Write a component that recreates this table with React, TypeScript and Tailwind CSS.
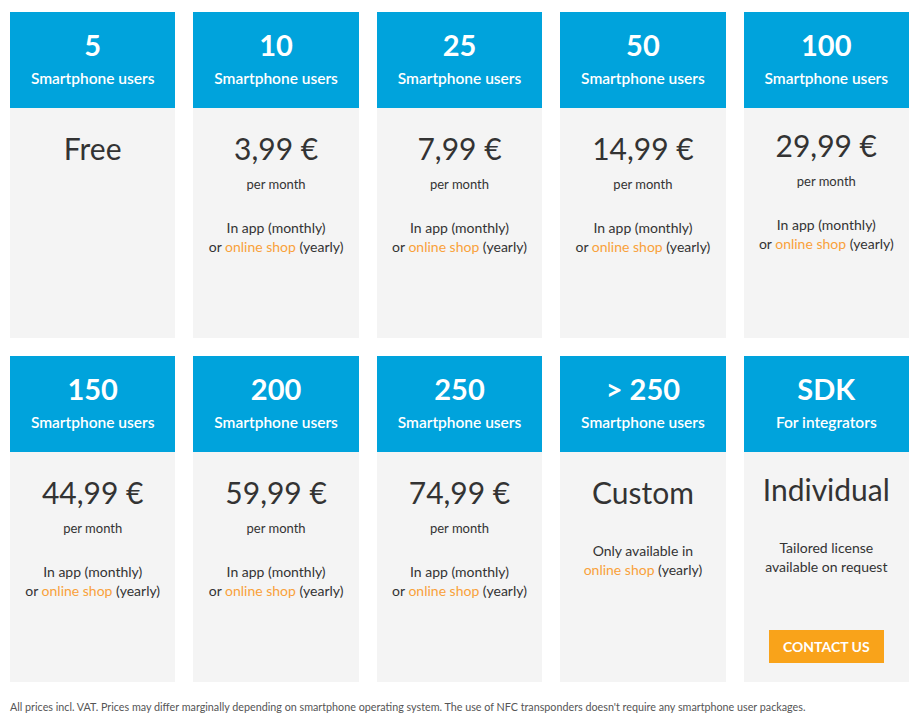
import React from 'react';

type Plan = {
  count: string;
  label: string;
  price: string;
  perMonth?: boolean;
  kind: 'free' | 'shop' | 'custom' | 'sdk';
  lift?: boolean;
};

const plans: Plan[] = [
  { count: '5', label: 'Smartphone users', price: 'Free', kind: 'free' },
  { count: '10', label: 'Smartphone users', price: '3,99 €', perMonth: true, kind: 'shop' },
  { count: '25', label: 'Smartphone users', price: '7,99 €', perMonth: true, kind: 'shop' },
  { count: '50', label: 'Smartphone users', price: '14,99 €', perMonth: true, kind: 'shop' },
  { count: '100', label: 'Smartphone users', price: '29,99 €', perMonth: true, kind: 'shop', lift: true },
  { count: '150', label: 'Smartphone users', price: '44,99 €', perMonth: true, kind: 'shop' },
  { count: '200', label: 'Smartphone users', price: '59,99 €', perMonth: true, kind: 'shop' },
  { count: '250', label: 'Smartphone users', price: '74,99 €', perMonth: true, kind: 'shop' },
  { count: '> 250', label: 'Smartphone users', price: 'Custom', kind: 'custom' },
  { count: 'SDK', label: 'For integrators', price: 'Individual', kind: 'sdk', lift: true },
];

const Shop = () => <span className="text-[#f9a13a]">online shop</span>;

function PlanCard({ plan }: { plan: Plan }) {
  return (
    <div className="flex flex-col">
      <div className="h-[96px] bg-[#00a3dc] text-white text-center flex flex-col items-center pt-[16px]">
        <div className="text-[29px] font-bold leading-[34px]">{plan.count}</div>
        <div className="text-[15.5px] font-semibold leading-[20px] mt-[6px]">{plan.label}</div>
      </div>
      <div className={`h-[230px] bg-[#f4f4f4] text-[#333] text-center flex flex-col items-center ${plan.lift ? 'pt-[19px]' : 'pt-[22px]'}`}>
        <div className="text-[30px] leading-[36px]">{plan.price}</div>
        {plan.perMonth && <div className="text-[13px] leading-[18px] mt-[9px]">per month</div>}
        {plan.kind === 'shop' && (
          <div className="text-[14px] leading-[19px] mt-[25px]">
            In app (monthly)
            <br />
            or <Shop /> (yearly)
          </div>
        )}
        {plan.kind === 'custom' && (
          <div className="text-[14px] leading-[19px] mt-[31px]">
            Only available in
            <br />
            <Shop /> (yearly)
          </div>
        )}
        {plan.kind === 'sdk' && (
          <>
            <div className="text-[14px] leading-[19px] mt-[31px]">
              Tailored license
              <br />
              available on request
            </div>
            <button className="mt-[54px] w-[115px] h-[33px] bg-[#f9a31a] text-white text-[14px] font-bold uppercase">
              Contact us
            </button>
          </>
        )}
      </div>
    </div>
  );
}

export default function App() {
  return (
    <div className="bg-white min-h-screen pl-[10px] pr-[6px] pt-[12px]" style={{ fontFamily: 'Lato, "Noto Sans", sans-serif' }}>
      <div className="grid grid-cols-5 gap-x-[18px] gap-y-[18px]">
        {plans.map((p, i) => (
          <PlanCard key={i} plan={p} />
        ))}
      </div>
      <p className="mt-[17px] text-[10.75px] text-[#555]">
        All prices incl. VAT. Prices may differ marginally depending on smartphone operating system. The use of NFC transponders doesn't require any smartphone user packages.
      </p>
    </div>
  );
}
